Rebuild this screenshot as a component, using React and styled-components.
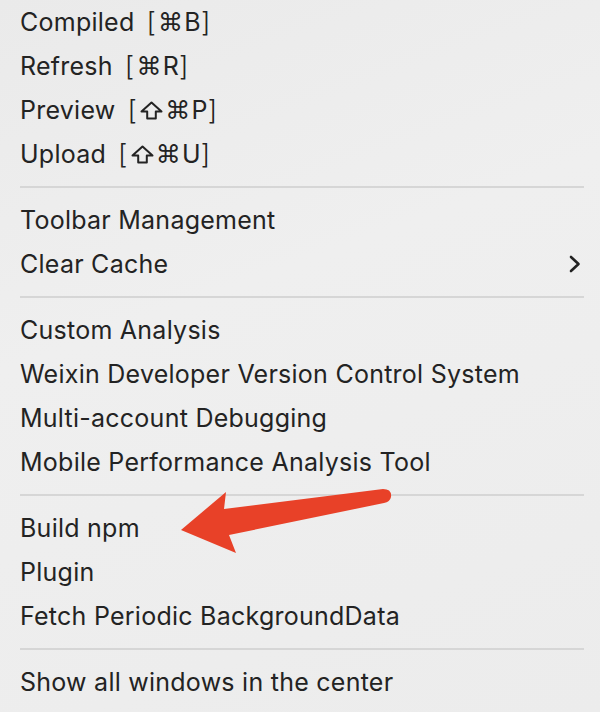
import React from 'react';
import styled, { createGlobalStyle } from 'styled-components';

const GlobalStyle = createGlobalStyle`
  html, body {
    margin: 0;
    padding: 0;
    background: #ececec;
  }
  body {
    font-family: Inter, "Noto Sans", "DejaVu Sans", sans-serif;
    -webkit-font-smoothing: antialiased;
  }
`;

const Menu = styled.div`
  position: relative;
  width: 600px;
  height: 712px;
  box-sizing: border-box;
  padding: 0 16px 0 20px;
  background: linear-gradient(160deg, #eaeaea 0%, #efefef 40%, #ececec 100%);
  display: flex;
  flex-direction: column;
  overflow: hidden;
`;

const Row = styled.div`
  height: 44px;
  display: flex;
  align-items: center;
  justify-content: space-between;
  color: #232323;
  font-size: 25px;
  letter-spacing: 0.25px;
  white-space: nowrap;
`;

const Label = styled.span`
  display: inline-flex;
  align-items: center;
`;

const Shortcut = styled.span`
  margin-left: 12px;
  display: inline-flex;
  align-items: center;
`;

const Bracket = styled.span`
  font-weight: 300;
  font-size: 27px;
  line-height: 1;
`;

const Cmd = styled.span`
  font-family: "DejaVu Sans", sans-serif;
  font-size: 25px;
  line-height: 1;
  margin: 0 1px 0 2px;
`;

const Separator = styled.div`
  height: 22px;
  display: flex;
  align-items: center;

  &::after {
    content: "";
    display: block;
    width: 100%;
    height: 2px;
    background: #d6d6d6;
  }
`;

const ShiftIcon = () => (
  <svg width="23" height="19" viewBox="0 0 23 19" style={{ marginLeft: 3 }}>
    <path
      d="M11.5 1.5 L21.5 10.5 L15.8 10.5 L15.8 17.5 L7.2 17.5 L7.2 10.5 L1.5 10.5 Z"
      fill="none"
      stroke="#232323"
      strokeWidth="2"
      strokeLinejoin="round"
    />
  </svg>
);

const Chevron = () => (
  <svg width="14" height="18" viewBox="0 0 14 18" style={{ marginRight: 2 }}>
    <path d="M3 2 L10.5 9 L3 16" fill="none" stroke="#222" strokeWidth="2.6" strokeLinecap="round" strokeLinejoin="round" />
  </svg>
);

const ArrowMark = styled.svg`
  position: absolute;
  left: 0;
  top: 0;
  pointer-events: none;
`;

const groups = [
  [
    { label: 'Compiled', key: 'B' },
    { label: 'Refresh', key: 'R' },
    { label: 'Preview', shift: true, key: 'P' },
    { label: 'Upload', shift: true, key: 'U' },
  ],
  [
    { label: 'Toolbar Management' },
    { label: 'Clear Cache', sub: true },
  ],
  [
    { label: 'Custom Analysis' },
    { label: 'Weixin Developer Version Control System' },
    { label: 'Multi-account Debugging' },
    { label: 'Mobile Performance Analysis Tool' },
  ],
  [
    { label: 'Build npm' },
    { label: 'Plugin' },
    { label: 'Fetch Periodic BackgroundData' },
  ],
  [
    { label: 'Show all windows in the center' },
  ],
];

export default function App() {
  return (
    <>
      <GlobalStyle />
      <Menu>
        {groups.map((items, gi) => (
          <React.Fragment key={gi}>
            {gi > 0 && <Separator />}
            {items.map((item) => (
              <Row key={item.label}>
                <Label>
                  {item.label}
                  {item.key && (
                    <Shortcut>
                      <Bracket>[</Bracket>
                      {item.shift && <ShiftIcon />}
                      <Cmd>⌘</Cmd>
                      {item.key}
                      <Bracket>]</Bracket>
                    </Shortcut>
                  )}
                </Label>
                {item.sub && <Chevron />}
              </Row>
            ))}
          </React.Fragment>
        ))}
        <ArrowMark width="600" height="712" viewBox="0 0 600 712">
          <path
            d="M181 530 L226 492 L224 509 L383 489 Q392 489 391 497 Q390 502 384 503 L229 535 L236 553 Z"
            fill="#e84128"
          />
        </ArrowMark>
      </Menu>
    </>
  );
}
